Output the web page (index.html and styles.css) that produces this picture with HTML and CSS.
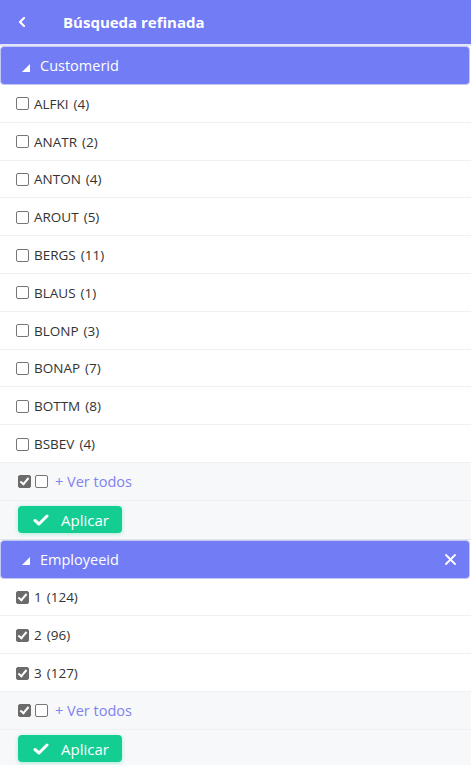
FILE: index.html
```html
<!DOCTYPE html>
<html>
<head>
	<meta charset="utf-8" />
	<title>Búsqueda refinada</title>
	<link rel="stylesheet" href="styles.css">
</head>
<body>
	<div class="topbar">
		<span class="back">
			<svg width="10" height="12" viewBox="0 0 10 12"><path d="M7 2 L3 6 L7 10" fill="none" stroke="#fff" stroke-width="2.2" stroke-linecap="round" stroke-linejoin="round"/></svg>
		</span>
		<span class="title">Búsqueda refinada</span>
	</div>

	<div class="facet">
		<div class="facet-head">
			<span class="tri"></span>
			<span class="facet-name">Customerid</span>
		</div>
		<div class="row"><span class="cb"></span><span class="lbl">ALFKI</span><span class="cnt">(4)</span></div>
		<div class="row"><span class="cb"></span><span class="lbl">ANATR</span><span class="cnt">(2)</span></div>
		<div class="row"><span class="cb"></span><span class="lbl">ANTON</span><span class="cnt">(4)</span></div>
		<div class="row"><span class="cb"></span><span class="lbl">AROUT</span><span class="cnt">(5)</span></div>
		<div class="row"><span class="cb"></span><span class="lbl">BERGS</span><span class="cnt">(11)</span></div>
		<div class="row"><span class="cb"></span><span class="lbl">BLAUS</span><span class="cnt">(1)</span></div>
		<div class="row"><span class="cb"></span><span class="lbl">BLONP</span><span class="cnt">(3)</span></div>
		<div class="row"><span class="cb"></span><span class="lbl">BONAP</span><span class="cnt">(7)</span></div>
		<div class="row"><span class="cb"></span><span class="lbl">BOTTM</span><span class="cnt">(8)</span></div>
		<div class="row"><span class="cb"></span><span class="lbl">BSBEV</span><span class="cnt">(4)</span></div>
		<div class="row more"><span class="cb on"></span><span class="cb"></span><span class="link">+ Ver todos</span></div>
		<div class="row apply"><button class="btn"><svg width="16" height="12" viewBox="0 0 16 12"><path d="M2 6.5 L6 10 L14 2" fill="none" stroke="#fff" stroke-width="3" stroke-linecap="round" stroke-linejoin="round"/></svg>Aplicar</button></div>
	</div>

	<div class="facet">
		<div class="facet-head">
			<span class="tri"></span>
			<span class="facet-name">Employeeid</span>
			<span class="close">
				<svg width="11" height="11" viewBox="0 0 11 11"><path d="M1 1 L10 10 M10 1 L1 10" stroke="#fff" stroke-width="1.8" stroke-linecap="round"/></svg>
			</span>
		</div>
		<div class="row"><span class="cb on"></span><span class="lbl">1</span><span class="cnt">(124)</span></div>
		<div class="row"><span class="cb on"></span><span class="lbl">2</span><span class="cnt">(96)</span></div>
		<div class="row"><span class="cb on"></span><span class="lbl">3</span><span class="cnt">(127)</span></div>
		<div class="row more"><span class="cb on"></span><span class="cb"></span><span class="link">+ Ver todos</span></div>
		<div class="row apply"><button class="btn"><svg width="16" height="12" viewBox="0 0 16 12"><path d="M2 6.5 L6 10 L14 2" fill="none" stroke="#fff" stroke-width="3" stroke-linecap="round" stroke-linejoin="round"/></svg>Aplicar</button></div>
	</div>
</body>
</html>
```

FILE: styles.css
```css
body {
	margin: 0;
	font-family: "Open Sans", "Noto Sans", sans-serif;
	background-color: #fff;
	color: #333;
}
.topbar {
	height: 44px;
	background-color: #727cf5;
	display: flex;
	align-items: center;
	border-bottom: 2px solid #e4e6f8;
}
.back {
	width: 17px;
	margin-left: 17px;
	display: flex;
}
.title {
	margin-left: 29px;
	color: #fff;
	font-weight: bold;
	font-size: 15px;
}
.facet-head {
	height: 37px;
	background-color: #727cf5;
	border: 1px solid #c3c7f3;
	border-radius: 4px;
	margin-right: 1px;
	display: flex;
	align-items: center;
	color: #fff;
	font-size: 14.5px;
}
.tri {
	width: 0;
	height: 0;
	margin-left: 21px;
	margin-top: 4px;
	border-left: 8px solid transparent;
	border-bottom: 8px solid #fff;
}
.facet-name {
	margin-left: 10px;
	flex: 1;
}
.close {
	display: flex;
	margin-right: 13px;
}
.row {
	height: 36.8px;
	border-bottom: 1px solid #eef0f4;
	display: flex;
	align-items: center;
	padding-left: 16px;
	padding-top: 1px;
	box-sizing: border-box;
	height: 37.8px;
	font-size: 13.5px;
}
.cb {
	width: 11px;
	height: 11px;
	border: 1px solid #767676;
	border-radius: 2px;
	background-color: #fff;
	margin-right: 5px;
	position: relative;
}
.cb.on {
	background-color: #6b6b6b;
	border-color: #6b6b6b;
}
.cb.on::after {
	content: "";
	position: absolute;
	left: 3px;
	top: 0px;
	width: 3px;
	height: 7px;
	border-right: 2px solid #fff;
	border-bottom: 2px solid #fff;
	transform: rotate(40deg);
}
.lbl {
	color: #333;
}
.cnt {
	margin-left: 5px;
	color: #333;
}
.more {
	background-color: #f7f8fa;
	padding-left: 18px;
}
.more .cb {
	margin-right: 4px;
}
.link {
	margin-left: 3px;
	color: #8083ef;
	font-size: 14.5px;
}
.apply {
	background-color: #f7f8fa;
	padding-left: 18px;
	padding-top: 0;
	border-bottom: 1px solid #e2e5ee;
	height: 38.8px;
}
.btn {
	height: 27px;
	width: 104px;
	background-color: #14cd93;
	border: none;
	border-radius: 4px;
	color: #fff;
	font-family: "Open Sans", "Noto Sans", sans-serif;
	font-size: 15px;
	display: flex;
	align-items: center;
	padding: 0 0 0 15px;
	box-shadow: 0 1px 4px rgba(20, 205, 147, 0.35);
}
.btn svg {
	margin-right: 12px;
}
```
